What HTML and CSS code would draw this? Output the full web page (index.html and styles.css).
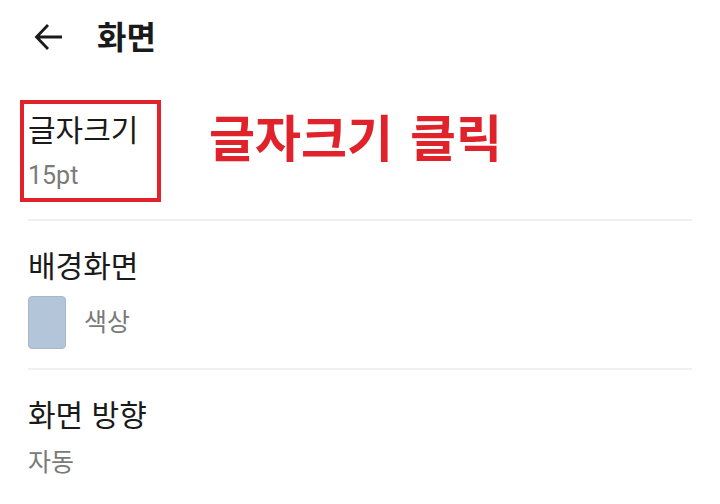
FILE: index.html
```html
<!DOCTYPE html>
<html lang="ko">
<head>
<meta charset="utf-8">
<link rel="stylesheet" href="styles.css">
</head>
<body>
<div class="screen">
  <header class="topbar">
    <svg class="back" width="30" height="28" viewBox="0 0 30 28" aria-hidden="true">
      <path d="M28 14H3M14 2L2.5 14L14 26" fill="none" stroke="#1a1a1a" stroke-width="2.8" stroke-linecap="butt" stroke-linejoin="miter"/>
    </svg>
    <h1 class="title">화면</h1>
  </header>

  <section class="item item-font">
    <div class="highlight">
      <div class="label">글자크기</div>
      <div class="value">15pt</div>
    </div>
    <div class="note">글자크기 클릭</div>
  </section>
  <div class="divider"></div>

  <section class="item item-bg">
    <div class="label">배경화면</div>
    <div class="swatch-row">
      <span class="swatch"></span>
      <span class="value">색상</span>
    </div>
  </section>
  <div class="divider"></div>

  <section class="item item-orient">
    <div class="label">화면 방향</div>
    <div class="value">자동</div>
  </section>
</div>
</body>
</html>
```
FILE: styles.css
```css
html, body {
  margin: 0;
  padding: 0;
  background: #ffffff;
}
body {
  font-family: "Noto Sans CJK KR", "Noto Sans", sans-serif;
  color: #1a1a1a;
}
.screen {
  width: 720px;
  height: 504px;
  overflow: hidden;
  box-sizing: border-box;
}
.topbar {
  display: flex;
  align-items: center;
  height: 74px;
  padding-left: 34px;
}
.back {
  display: block;
  margin-top: -1px;
}
.title {
  margin: -4px 0 0 33px;
  font-size: 32px;
  font-weight: 700;
  line-height: 1;
}
.item {
  padding: 0 28px;
}
.label {
  font-size: 30px;
  line-height: 40px;
  color: #1a1a1a;
}
.value {
  font-family: "Roboto", "Noto Sans CJK KR", sans-serif;
  font-size: 25px;
  line-height: 34px;
  color: #7a7a7a;
}
.item-font {
  display: flex;
  align-items: flex-start;
  padding-left: 20px;
  padding-top: 26px;
  padding-bottom: 17px;
}
.highlight {
  border: 4px solid #e0232a;
  width: 141px;
  height: 102px;
  box-sizing: border-box;
  padding: 4px 0 0 4px;
}
.highlight .value {
  margin-top: 11px;
}
.note {
  margin-left: 48px;
  margin-top: 10px;
  font-size: 50px;
  font-weight: 700;
  color: #e0232a;
  line-height: 1;
  word-spacing: 3px;
}
.divider {
  height: 2px;
  margin: 0 28px;
  background: #f0f0f0;
}
.item-bg {
  padding-top: 23px;
  padding-bottom: 19px;
}
.swatch-row {
  display: flex;
  align-items: center;
  margin-top: 12px;
}
.swatch {
  width: 38px;
  height: 53px;
  box-sizing: border-box;
  border-radius: 4px;
  background: #b3c6d9;
  border: 1px solid #a6b8ca;
}
.swatch-row .value {
  margin-left: 18px;
}
.item-orient {
  padding-top: 23px;
}
.item-orient .value {
  margin-top: 13px;
}
```
